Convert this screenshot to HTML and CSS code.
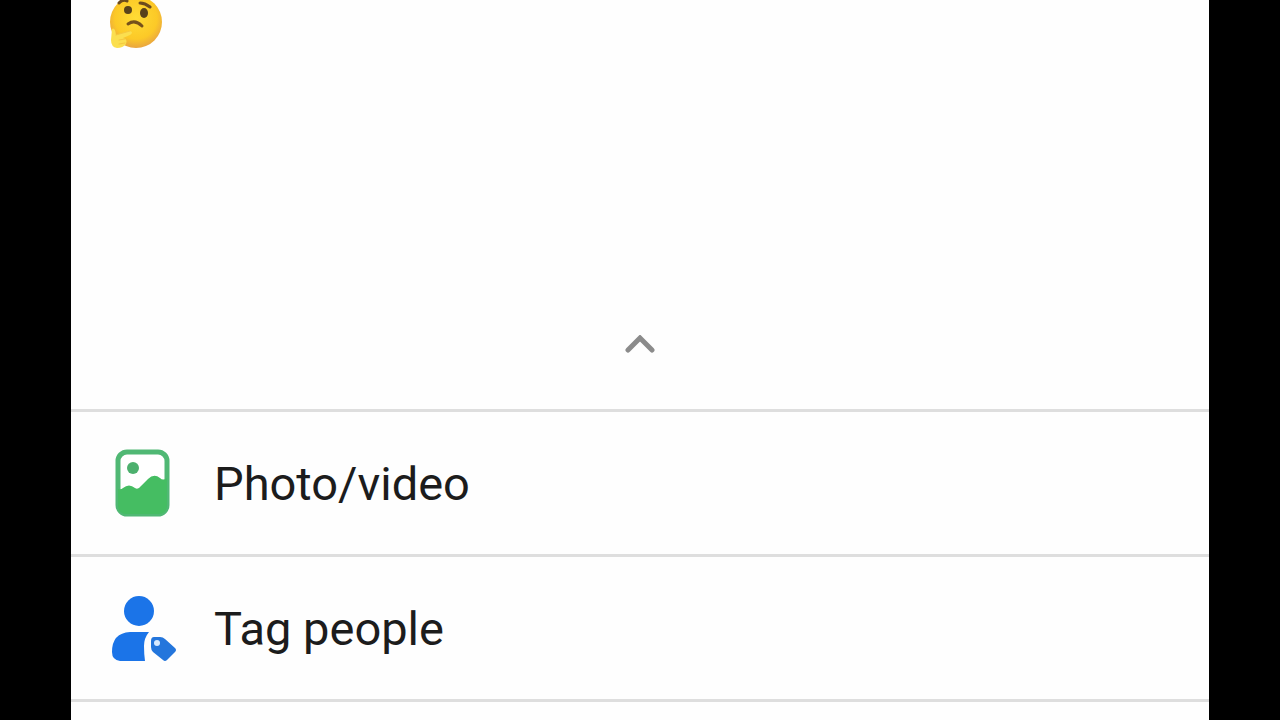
FILE: index.html
```html
<!DOCTYPE html>
<html lang="en">
<head>
  <meta charset="UTF-8">
  <meta name="viewport" content="width=device-width, initial-scale=1.0">
  <title>Create post</title>
  <link rel="stylesheet" href="styles.css">
</head>
<body>
  <main class="composer">
    <section class="post">
      <svg class="emoji" viewBox="0 0 56 50" role="img" aria-label="Thinking face">
        <defs>
          <radialGradient id="face" cx="50%" cy="42%" r="58%">
            <stop offset="0" stop-color="#ffdc35"/>
            <stop offset="0.7" stop-color="#fcc927"/>
            <stop offset="1" stop-color="#e9a540"/>
          </radialGradient>
        </defs>
        <circle cx="28" cy="22" r="26" fill="url(#face)"/>
        <path d="M11 3Q15 -1 19 1M32 3Q37 3 42 7" fill="none" stroke="#6d4b1d" stroke-width="3" stroke-linecap="round"/>
        <ellipse cx="20" cy="10" rx="4" ry="4" fill="#59421b"/>
        <ellipse cx="36" cy="13" rx="4" ry="5" fill="#59421b"/>
        <path d="M20 24Q27 19 34 26" fill="none" stroke="#76511b" stroke-width="3" stroke-linecap="round"/>
        <path d="M4 29Q7 27 8 35L22 31Q26 32 22 35L15 38Q20 39 18 44Q15 48 9 48Q3 47 3 40Z" fill="#fbdf4f"/>
        <path d="M8 35L22 31M11 40L17 39M11 44L17 43" fill="none" stroke="#f5c840" stroke-width="1" stroke-linecap="round"/>
      </svg>
      <button class="expand" type="button" aria-label="Show more options">
        <svg class="chevron" viewBox="0 0 32 20" aria-hidden="true">
          <path d="M4 15L16 3L28 15" fill="none" stroke="#8b8b8b" stroke-width="5" stroke-linecap="round"/>
        </svg>
      </button>
    </section>

    <ul class="options">
      <li>
        <button class="option" type="button">
          <svg class="icon" viewBox="0 0 68 72" aria-hidden="true">
            <rect x="7" y="4" width="49" height="62" rx="9" fill="#fff" stroke="#50b874" stroke-width="5"/>
            <circle cx="22" cy="20" r="6" fill="#4db06e"/>
            <path d="M7 41Q10 42 12 40Q18 35 24 40Q27 42 30 38L37 31Q43 25 49 30Q52 33 56 30V57Q56 66 47 66H16Q7 66 7 57Z" fill="#45bd62"/>
          </svg>
          <span>Photo/video</span>
        </button>
      </li>
      <li>
        <button class="option" type="button">
          <svg class="icon" viewBox="0 0 68 72" aria-hidden="true">
            <circle cx="28" cy="18" r="15" fill="#1b74e8"/>
            <path d="M19 39H38Q33 45 33 53Q33 61 34 68H9Q1 67 1 59Q1 40 19 39Z" fill="#1b74e8"/>
            <path d="M43 44H49Q52 44 54 46L64 55Q66 57 64 59L56 67Q54 69 52 67L42 59Q40 57 40 54V48Q40 44 43 44Z" fill="#2476dc"/>
            <circle cx="46" cy="50" r="3" fill="#d7eaff"/>
          </svg>
          <span>Tag people</span>
        </button>
      </li>
      <li></li>
    </ul>
  </main>
</body>
</html>
```
FILE: styles.css
```css
* {
  margin: 0;
  padding: 0;
  box-sizing: border-box;
}

body {
  background-color: #000;
  font-family: Roboto, sans-serif;
  padding: 0 71px;
  height: 100vh;
  overflow: hidden;
}

.composer {
  background-color: #fefefe;
  min-height: 100%;
}

.post {
  display: flex;
  flex-direction: column;
  justify-content: space-between;
  min-height: 409px;
  padding: 0 37px 44px;
}

.emoji {
  width: 56px;
  height: 50px;
}

.expand {
  align-self: center;
  display: flex;
  padding: 10px;
  border: none;
  background: none;
  cursor: pointer;
}

.chevron {
  width: 32px;
  height: 20px;
}

.options {
  list-style: none;
}

.options li {
  border-top: 3px solid #dedede;
}

.option {
  display: flex;
  align-items: center;
  gap: 35px;
  width: 100%;
  padding: 36px 40px 34px;
  border: none;
  background: none;
  color: #1c1c1c;
  font-family: inherit;
  font-size: 47px;
  line-height: 72px;
  text-align: left;
  cursor: pointer;
}

.icon {
  flex: none;
  width: 68px;
  height: 72px;
}
```
